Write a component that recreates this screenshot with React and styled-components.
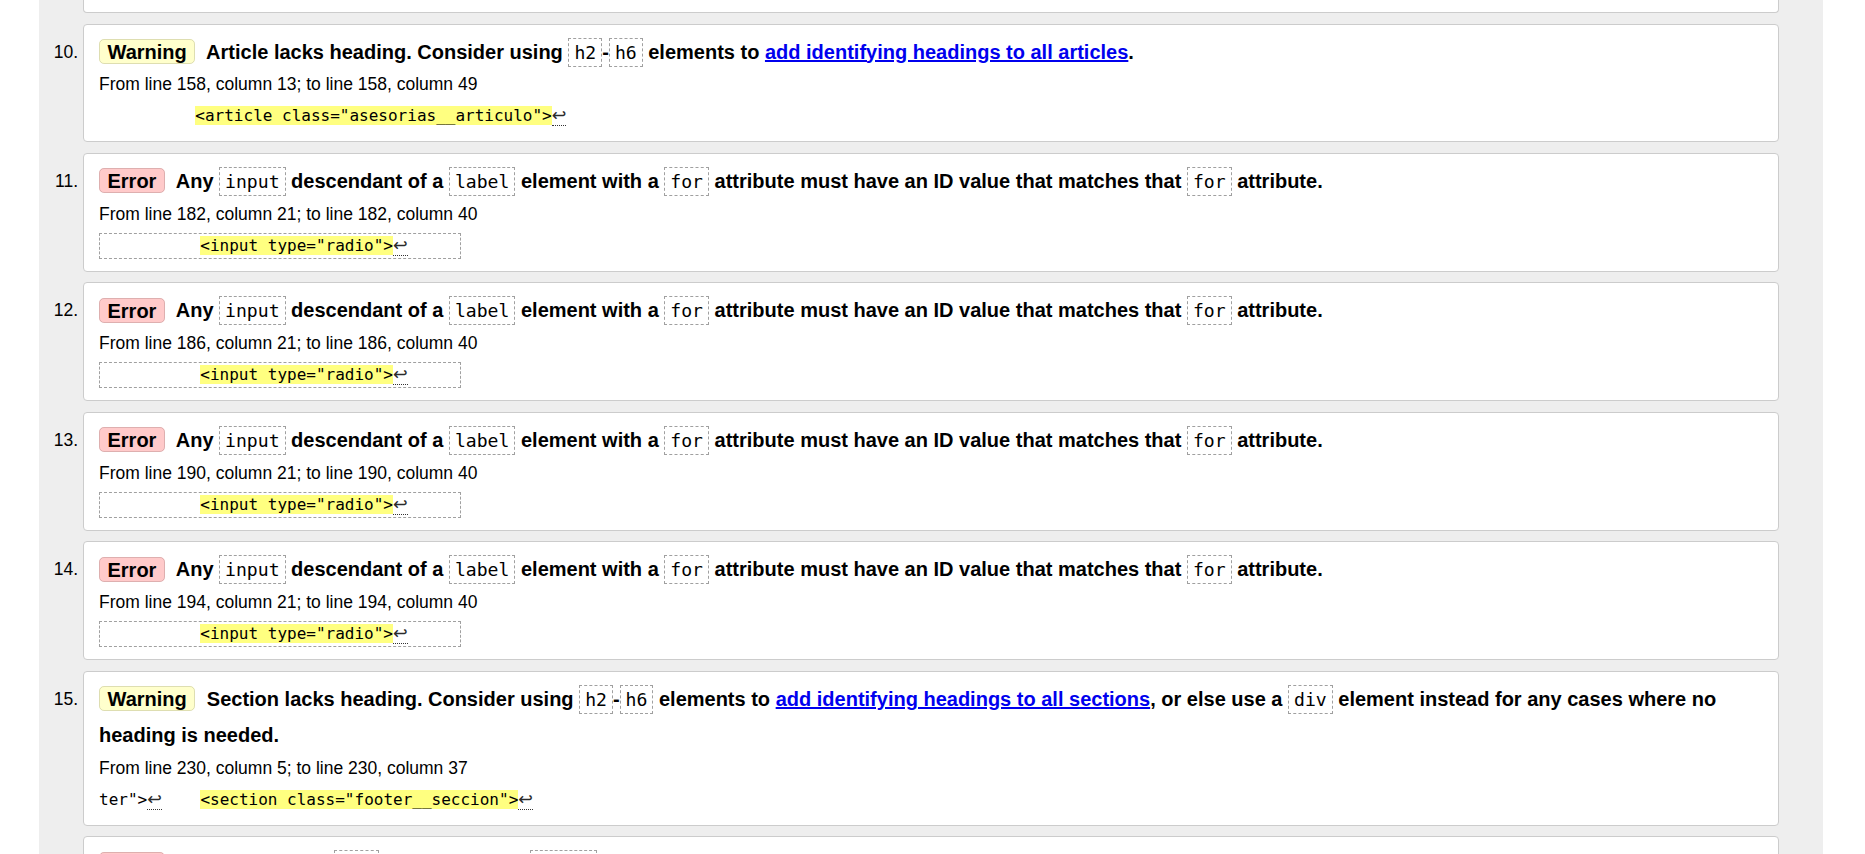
import React from 'react';
import styled, { createGlobalStyle } from 'styled-components';

const GlobalStyle = createGlobalStyle`
  *, *::before, *::after {
    box-sizing: border-box;
  }
  html, body {
    margin: 0;
    padding: 0;
    overflow: hidden;
    background: #fff;
    color: #000;
    font-family: "Liberation Sans", Arial, sans-serif;
  }
`;

const Wrapper = styled.div`
  margin: 0 42px 0 39px;
  min-height: 100vh;
  background: #eeeeee;
`;

const List = styled.ol`
  list-style: none;
  margin: 0;
  padding: 0 44px 0 0;
  display: flex;
  flex-direction: column;
  gap: 10.5px;
`;

const Item = styled.li`
  display: flex;
  gap: 5px;
`;

const Number = styled.div`
  width: 39px;
  flex: none;
  text-align: right;
  padding-top: 10px;
  font-size: 17.5px;
  line-height: 36px;
`;

const Card = styled.div`
  flex: 1;
  background: #fff;
  border: 1px solid #cccccc;
  border-radius: 4px;
  padding: 9px 15px 12.4px;
  min-width: 0;
`;

const CardTail = styled.div`
  margin-left: 44px;
  height: 13px;
  background: #fff;
  border: 1px solid #cccccc;
  border-top: none;
  border-radius: 0 0 4px 4px;
`;

const Title = styled.p`
  margin: 0;
  font-size: 20px;
  font-weight: bold;
  line-height: 36px;
`;

const Badge = styled.strong`
  padding: 0.5px 7.5px;
  margin-right: 6px;
  border: 1px solid rgba(0, 0, 0, 0.13);
  border-radius: 5px;
  line-height: 1;
  background: ${p => (p.$kind === 'error' ? '#ffcaca' : '#ffffcc')};
`;

const Code = styled.code`
  font-family: "DejaVu Sans Mono", monospace;
  font-size: 18.1px;
  font-weight: normal;
  line-height: 1;
  padding: 3px 5px;
  border: 1px dashed #a0a0a0;
`;

const Link = styled.a`
  color: #0000ee;
  text-decoration: underline;
`;

const Location = styled.p`
  margin: 3.6px 0 0;
  font-size: 17.5px;
  line-height: 22px;
`;

const ExtractRow = styled.div`
  display: flex;
  margin-top: 8px;
`;

const Extract = styled.code`
  white-space: pre;
  font-family: "DejaVu Sans Mono", monospace;
  font-size: 16px;
  line-height: 20px;
  height: 26px;
  border: ${p => (p.$boxed ? '1px dashed #a0a0a0' : 'none')};
  padding: ${p => (p.$boxed ? '2px 4px' : '3px 0')};
`;

const Mark = styled.b`
  font-weight: normal;
  background: #ffff80;
`;

const LineBreak = styled.span`
  font-family: "DejaVu Sans", sans-serif;
  font-size: 17.5px;
  line-height: 1;
  color: #2b2b2b;
  border-bottom: 1px dotted #333;
`;

const lf = <LineBreak title="line break">↩</LineBreak>;

const labelMessage = (
  <>
    Any <Code>input</Code> descendant of a <Code>label</Code> element with a <Code>for</Code> attribute
    must have an ID value that matches that <Code>for</Code> attribute.
  </>
);

const radioExtract = (
  <>
    {'          '}
    <Mark>{'<input type="radio">'}</Mark>
    {lf}
    {'     '}
  </>
);

const messages = [
  {
    n: 10,
    kind: 'warning',
    text: (
      <>
        Article lacks heading. Consider using <Code>h2</Code>-<Code>h6</Code> elements to{' '}
        <Link href="#">add identifying headings to all articles</Link>.
      </>
    ),
    loc: 'From line 158, column 13; to line 158, column 49',
    boxed: false,
    extract: (
      <>
        {'          '}
        <Mark>{'<article class="asesorias__articulo">'}</Mark>
        {lf}
      </>
    ),
  },
  { n: 11, kind: 'error', text: labelMessage, loc: 'From line 182, column 21; to line 182, column 40', boxed: true, extract: radioExtract },
  { n: 12, kind: 'error', text: labelMessage, loc: 'From line 186, column 21; to line 186, column 40', boxed: true, extract: radioExtract },
  { n: 13, kind: 'error', text: labelMessage, loc: 'From line 190, column 21; to line 190, column 40', boxed: true, extract: radioExtract },
  { n: 14, kind: 'error', text: labelMessage, loc: 'From line 194, column 21; to line 194, column 40', boxed: true, extract: radioExtract },
  {
    n: 15,
    kind: 'warning',
    text: (
      <>
        Section lacks heading. Consider using <Code>h2</Code>-<Code>h6</Code> elements to{' '}
        <Link href="#">add identifying headings to all sections</Link>, or else use a <Code>div</Code>{' '}
        element instead for any cases where no heading is needed.
      </>
    ),
    loc: 'From line 230, column 5; to line 230, column 37',
    boxed: false,
    extract: (
      <>
        {'ter">'}
        {lf}
        {'    '}
        <Mark>{'<section class="footer__seccion">'}</Mark>
        {lf}
      </>
    ),
  },
  {
    n: 16,
    kind: 'error',
    text: (
      <>
        The value of the <Code>for</Code> attribute of the <Code>label</Code> element must be the ID of a
        non-hidden form control.
      </>
    ),
    loc: 'From line 236, column 9; to line 236, column 27',
    boxed: true,
    extract: (
      <>
        {'        '}
        <Mark>{'<label for="nombre">'}</Mark>
        {lf}
      </>
    ),
  },
];

export default function App() {
  return (
    <>
      <GlobalStyle />
      <Wrapper>
        <List>
          <li>
            <CardTail />
          </li>
          {messages.map(m => (
            <Item key={m.n}>
              <Number>{m.n}.</Number>
              <Card>
                <Title>
                  <Badge $kind={m.kind}>{m.kind === 'error' ? 'Error' : 'Warning'}</Badge> {m.text}
                </Title>
                <Location>{m.loc}</Location>
                <ExtractRow>
                  <Extract $boxed={m.boxed}>{m.extract}</Extract>
                </ExtractRow>
              </Card>
            </Item>
          ))}
        </List>
      </Wrapper>
    </>
  );
}
